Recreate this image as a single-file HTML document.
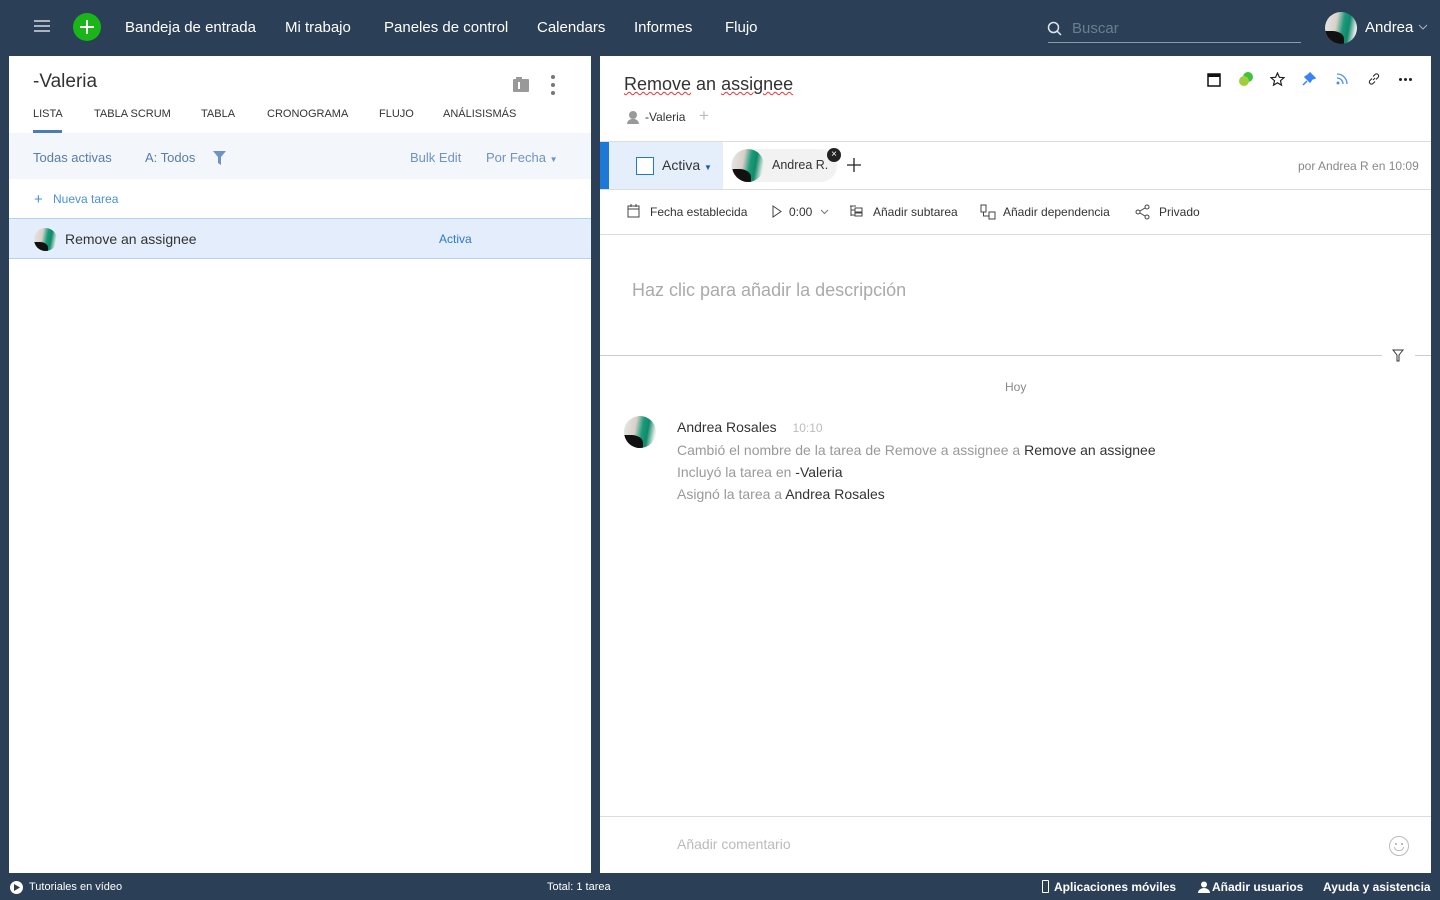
<!DOCTYPE html>
<html><head><meta charset="utf-8"><style>
*{box-sizing:border-box;margin:0;padding:0}
body{width:1440px;height:900px;background:#2b3f57;font-family:"Liberation Sans",sans-serif;position:relative;overflow:hidden;color:#333}
.a{position:absolute;white-space:nowrap}
.av{position:absolute;border-radius:50%;background:linear-gradient(100deg,#e8e8e8 0%,#d8d0c8 35%,#1a9a7a 55%,#0f8a6a 70%,#eee 90%);overflow:hidden}
.av::after{content:"";position:absolute;left:0;bottom:0;width:60%;height:40%;background:#111;border-radius:0 60% 0 0}
.nav{color:#fff;font-size:15px;top:19px}
</style></head><body>
<div class="a" style="left:34px;top:20px;width:16px;height:2px;background:#aab4c0;box-shadow:0 5px 0 #aab4c0,0 10px 0 #aab4c0"></div>
<div class="a" style="left:73px;top:13px;width:28px;height:28px;border-radius:50%;background:#19b519"></div>
<div class="a" style="left:80px;top:26px;width:14px;height:2px;background:#fff"></div>
<div class="a" style="left:86px;top:20px;width:2px;height:14px;background:#fff"></div>
<div class="a nav" style="left:125px">Bandeja de entrada</div>
<div class="a nav" style="left:285px">Mi trabajo</div>
<div class="a nav" style="left:384px">Paneles de control</div>
<div class="a nav" style="left:537px">Calendars</div>
<div class="a nav" style="left:634px">Informes</div>
<div class="a nav" style="left:725px">Flujo</div>
<svg class="a" style="left:1047px;top:21px" width="16" height="16" viewBox="0 0 16 16"><circle cx="6.5" cy="6.5" r="5" fill="none" stroke="#dfe5ec" stroke-width="1.5"/><path d="M10 10l4 4" stroke="#dfe5ec" stroke-width="1.5"/></svg>
<div class="a" style="left:1072px;top:20px;color:#6c7d90;font-size:15px">Buscar</div>
<div class="a" style="left:1048px;top:42px;width:253px;height:1px;background:#8a9bb0"></div>
<div class="av" style="left:1325px;top:12px;width:32px;height:32px"></div>
<div class="a" style="left:1365px;top:19px;color:#fff;font-size:15px">Andrea</div>
<svg class="a" style="left:1418px;top:24px" width="10" height="6"><path d="M1 1l4 4 4-4" fill="none" stroke="#aab4c0"/></svg>

<div class="a" style="left:9px;top:56px;width:582px;height:817px;background:#fff"></div>
<div class="a" style="left:33px;top:71px;font-size:19px;color:#333">-Valeria</div>
<div class="a" style="left:513px;top:79px;width:16px;height:13px;background:#999;border-radius:1px"></div>
<div class="a" style="left:516px;top:77px;width:6px;height:3px;background:#999"></div>
<div class="a" style="left:518px;top:82px;width:2px;height:7px;background:#fff"></div>
<div class="a" style="left:551px;top:75px;width:4px;height:4px;border-radius:50%;background:#777;box-shadow:0 8px 0 #777,0 16px 0 #777"></div>
<div class="a" style="top:108px;left:33px;font-size:11px;color:#333">LISTA</div>
<div class="a" style="top:108px;left:94px;font-size:11px;color:#333">TABLA SCRUM</div>
<div class="a" style="top:108px;left:201px;font-size:11px;color:#333">TABLA</div>
<div class="a" style="top:108px;left:267px;font-size:11px;color:#333">CRONOGRAMA</div>
<div class="a" style="top:108px;left:379px;font-size:11px;color:#333">FLUJO</div>
<div class="a" style="top:108px;left:443px;font-size:11px;color:#333">ANÁLISISMÁS</div>
<div class="a" style="left:33px;top:130px;width:29px;height:3px;background:#4a7db8"></div>
<div class="a" style="left:9px;top:133px;width:582px;height:46px;background:#f3f6fa"></div>
<div class="a" style="left:33px;top:150px;font-size:13px;color:#5a7ca6">Todas activas</div>
<div class="a" style="left:145px;top:150px;font-size:13px;color:#5a7ca6">A: Todos</div>
<svg class="a" style="left:213px;top:151px" width="13" height="14"><path d="M0 0h13l-5 6v8l-3-2v-6z" fill="#6f93c3"/></svg>
<div class="a" style="left:410px;top:150px;font-size:13px;color:#6f93c3">Bulk Edit</div>
<div class="a" style="left:486px;top:150px;font-size:13px;color:#6f93c3">Por Fecha <span style="font-size:8px">▼</span></div>
<div class="a" style="left:34px;top:191px;font-size:15px;color:#4a8fe0">+</div>
<div class="a" style="left:53px;top:192px;font-size:12px;color:#4a8fe0">Nueva tarea</div>
<div class="a" style="left:9px;top:218px;width:582px;height:41px;background:#e3edfb;border-top:1px solid #b5d0f0;border-bottom:1px solid #b5d0f0"></div>
<div class="av" style="left:34px;top:228px;width:23px;height:23px"></div>
<div class="a" style="left:65px;top:231px;font-size:14px;color:#333">Remove an assignee</div>
<div class="a" style="left:439px;top:232px;font-size:12px;color:#2e78d0">Activa</div>

<div class="a" style="left:600px;top:56px;width:831px;height:817px;background:#fff"></div>
<div class="a" style="left:624px;top:74px;font-size:18px;color:#333"><span style="text-decoration:underline wavy #e33;text-decoration-thickness:1px">Remove</span> an <span style="text-decoration:underline wavy #e33;text-decoration-thickness:1px">assignee</span></div>
<svg class="a" style="left:1207px;top:72px" width="14" height="15"><rect x="1" y="2" width="12" height="12" fill="none" stroke="#111" stroke-width="1.5"/><rect x="1" y="2" width="12" height="3" fill="#111"/></svg>
<div class="a" style="left:1243px;top:72px;width:10px;height:10px;border-radius:50%;background:#3cc43c"></div>
<div class="a" style="left:1239px;top:76px;width:10px;height:10px;border-radius:50%;background:#9fcf3b"></div>
<svg class="a" style="left:1270px;top:72px" width="15" height="15" viewBox="0 0 15 15"><path d="M7.5 1l1.9 4.3 4.6.4-3.5 3 1 4.5-4-2.4-4 2.4 1-4.5-3.5-3 4.6-.4z" fill="none" stroke="#222" stroke-width="1.2"/></svg>
<svg class="a" style="left:1302px;top:72px" width="14" height="14"><path d="M8 1l5 5-3 1-2 3-5-5 3-2zM5 9l-4 4" fill="#3b82f6" stroke="#3b82f6" stroke-width="1.5"/></svg>
<svg class="a" style="left:1335px;top:72px" width="14" height="14"><circle cx="3" cy="11" r="1.5" fill="#4a8ff0"/><path d="M2 6a6 6 0 016 6M2 2a10 10 0 0110 10" fill="none" stroke="#4a8ff0" stroke-width="1.3"/></svg>
<svg class="a" style="left:1367px;top:72px" width="14" height="14"><path d="M6 8l2-2M5 6.5l-2 2a2 2 0 003 3l2-2M9 7.5l2-2a2 2 0 00-3-3l-2 2" fill="none" stroke="#333" stroke-width="1.2"/></svg>
<div class="a" style="left:1399px;top:78px;width:3px;height:3px;border-radius:50%;background:#222;box-shadow:5px 0 0 #222,10px 0 0 #222"></div>
<div class="a" style="left:628px;top:111px;width:10px;height:14px"><div style="width:8px;height:8px;border-radius:50%;background:#999;margin-left:1px"></div><div style="width:12px;height:5px;border-radius:5px 5px 0 0;background:#999;margin-left:-1px"></div></div>
<div class="a" style="left:645px;top:110px;font-size:12px;color:#333">-Valeria</div>
<div class="a" style="left:699px;top:106px;font-size:17px;color:#bbb">+</div>
<div class="a" style="left:600px;top:141px;width:831px;height:49px;border-top:1px solid #ddd;border-bottom:1px solid #ddd"></div>
<div class="a" style="left:600px;top:142px;width:9px;height:47px;background:#1e78d6"></div>
<div class="a" style="left:609px;top:142px;width:114px;height:47px;background:#e4effb"></div>
<div class="a" style="left:636px;top:157px;width:18px;height:18px;border:1.5px solid #1e78d6;background:#fff"></div>
<div class="a" style="left:662px;top:157px;font-size:14px;color:#333">Activa <span style="font-size:8px;color:#1e5ab0">▼</span></div>
<div class="a" style="left:731px;top:149px;width:106px;height:33px;border-radius:17px;background:#f2f2f2"></div>
<div class="av" style="left:732px;top:149px;width:32px;height:33px"></div>
<div class="a" style="left:772px;top:158px;font-size:12.5px;color:#333">Andrea R.</div>
<div class="a" style="left:827px;top:148px;width:14px;height:14px;border-radius:50%;background:#222;color:#fff;font-size:10px;line-height:14px;text-align:center">×</div>
<svg class="a" style="left:847px;top:158px" width="14" height="14"><path d="M7 0v14M0 7h14" stroke="#222" stroke-width="1.3"/></svg>
<div class="a" style="left:1298px;top:159px;font-size:12px;color:#888">por Andrea R en 10:09</div>
<svg class="a" style="left:627px;top:204px" width="13" height="14"><rect x="1" y="2" width="11" height="11" fill="none" stroke="#444"/><path d="M1 5h11M4 0v3M9 0v3" stroke="#444"/></svg>
<div class="a" style="left:650px;top:205px;font-size:12px;color:#333">Fecha establecida</div>
<svg class="a" style="left:772px;top:205px" width="10" height="13"><path d="M1 1l8 5.5-8 5.5z" fill="none" stroke="#444"/></svg>
<div class="a" style="left:789px;top:205px;font-size:12px;color:#333">0:00</div>
<svg class="a" style="left:820px;top:209px" width="9" height="6"><path d="M1 1l3.5 3.5L8 1" fill="none" stroke="#777"/></svg>
<svg class="a" style="left:849px;top:205px" width="14" height="12"><path d="M1 1h6M2 1v10M2 5h4M2 10h4M6 3h7v4H6zM6 8h7v3H6z" fill="none" stroke="#444"/></svg>
<div class="a" style="left:873px;top:205px;font-size:12px;color:#333">Añadir subtarea</div>
<svg class="a" style="left:980px;top:204px" width="16" height="16"><rect x="1" y="1" width="5" height="7" fill="none" stroke="#444"/><rect x="9" y="8" width="6" height="7" fill="none" stroke="#444"/><path d="M3.5 8v4h5" fill="none" stroke="#444"/></svg>
<div class="a" style="left:1003px;top:205px;font-size:12px;color:#333">Añadir dependencia</div>
<svg class="a" style="left:1135px;top:204px" width="15" height="16"><circle cx="3" cy="8" r="2" fill="none" stroke="#444"/><circle cx="12" cy="3" r="2" fill="none" stroke="#444"/><circle cx="12" cy="13" r="2" fill="none" stroke="#444"/><path d="M5 7l5-3M5 9l5 3" stroke="#444"/></svg>
<div class="a" style="left:1159px;top:205px;font-size:12px;color:#333">Privado</div>
<div class="a" style="left:600px;top:234px;width:831px;height:1px;background:#ddd"></div>
<div class="a" style="left:632px;top:280px;font-size:18px;color:#aaa">Haz clic para añadir la descripción</div>
<div class="a" style="left:600px;top:355px;width:782px;height:1px;background:#ccc"></div>
<div class="a" style="left:1415px;top:355px;width:16px;height:1px;background:#ccc"></div>
<svg class="a" style="left:1392px;top:349px" width="12" height="13"><path d="M1 1h10l-4 5v6h-2v-6z" fill="none" stroke="#333"/></svg>
<div class="a" style="left:1005px;top:380px;font-size:12px;color:#888">Hoy</div>
<div class="av" style="left:624px;top:416px;width:32px;height:32px"></div>
<div class="a" style="left:677px;top:419px;font-size:14px;color:#333">Andrea Rosales <span style="font-size:12px;color:#bbb;margin-left:12px">10:10</span></div>
<div class="a" style="left:677px;top:442px;font-size:14px;color:#999">Cambió el nombre de la tarea de Remove a assignee a <span style="color:#333">Remove an assignee</span></div>
<div class="a" style="left:677px;top:464px;font-size:14px;color:#999">Incluyó la tarea en <span style="color:#333">-Valeria</span></div>
<div class="a" style="left:677px;top:486px;font-size:14px;color:#999">Asignó la tarea a <span style="color:#333">Andrea Rosales</span></div>
<div class="a" style="left:600px;top:816px;width:831px;height:1px;background:#ddd"></div>
<div class="a" style="left:677px;top:836px;font-size:14px;color:#bbb">Añadir comentario</div>
<div class="a" style="left:1389px;top:836px;width:20px;height:20px;border-radius:50%;border:1px solid #bbb"></div>
<div class="a" style="left:1395px;top:843px;width:2px;height:2px;background:#bbb;box-shadow:6px 0 0 #bbb"></div>
<div class="a" style="left:1394px;top:847px;width:10px;height:4px;border:1px solid #bbb;border-top:none;border-radius:0 0 5px 5px"></div>

<div class="a" style="left:10px;top:881px;width:13px;height:13px;border-radius:50%;background:#fff"></div>
<svg class="a" style="left:14px;top:884px" width="6" height="7"><path d="M0 0l6 3.5-6 3.5z" fill="#2b3f57"/></svg>
<div class="a" style="left:29px;top:881px;font-size:11px;color:#fff">Tutoriales en vídeo</div>
<div class="a" style="left:547px;top:881px;font-size:11px;color:#fff">Total: 1 tarea</div>
<div class="a" style="left:1042px;top:880px;width:7px;height:13px;border:1.5px solid #fff;border-radius:1px"></div>
<div class="a" style="left:1054px;top:880px;font-size:12px;font-weight:bold;color:#fff">Aplicaciones móviles</div>
<svg class="a" style="left:1198px;top:881px" width="12" height="12"><circle cx="6" cy="3.5" r="3" fill="#fff"/><path d="M0 12a6 5 0 0112 0z" fill="#fff"/></svg>
<div class="a" style="left:1212px;top:880px;font-size:12px;font-weight:bold;color:#fff">Añadir usuarios</div>
<div class="a" style="left:1323px;top:880px;font-size:12px;font-weight:bold;color:#fff">Ayuda y asistencia</div>
</body></html>
